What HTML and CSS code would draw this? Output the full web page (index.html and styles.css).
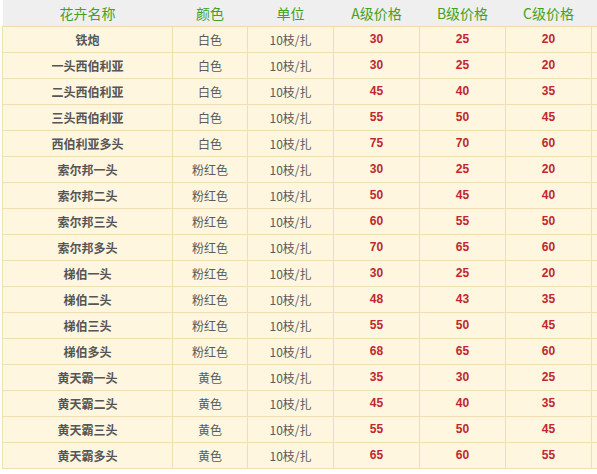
FILE: index.html
```html
<!DOCTYPE html>
<html>
<head>
<meta charset="utf-8">
<link rel="stylesheet" href="styles.css">
</head>
<body>
<table class="price">
<colgroup>
<col class="c-name"><col class="c-color"><col class="c-unit"><col class="c-p"><col class="c-p"><col class="c-p"><col class="c-rest">
</colgroup>
<thead>
<tr><th>花卉名称</th><th>颜色</th><th>单位</th><th>A级价格</th><th>B级价格</th><th>C级价格</th><th></th></tr>
</thead>
<tbody>
<tr><td class="name">铁炮</td><td>白色</td><td>10枝/扎</td><td class="p">30</td><td class="p">25</td><td class="p">20</td><td></td></tr>
<tr><td class="name">一头西伯利亚</td><td>白色</td><td>10枝/扎</td><td class="p">30</td><td class="p">25</td><td class="p">20</td><td></td></tr>
<tr><td class="name">二头西伯利亚</td><td>白色</td><td>10枝/扎</td><td class="p">45</td><td class="p">40</td><td class="p">35</td><td></td></tr>
<tr><td class="name">三头西伯利亚</td><td>白色</td><td>10枝/扎</td><td class="p">55</td><td class="p">50</td><td class="p">45</td><td></td></tr>
<tr><td class="name">西伯利亚多头</td><td>白色</td><td>10枝/扎</td><td class="p">75</td><td class="p">70</td><td class="p">60</td><td></td></tr>
<tr><td class="name">索尔邦一头</td><td>粉红色</td><td>10枝/扎</td><td class="p">30</td><td class="p">25</td><td class="p">20</td><td></td></tr>
<tr><td class="name">索尔邦二头</td><td>粉红色</td><td>10枝/扎</td><td class="p">50</td><td class="p">45</td><td class="p">40</td><td></td></tr>
<tr><td class="name">索尔邦三头</td><td>粉红色</td><td>10枝/扎</td><td class="p">60</td><td class="p">55</td><td class="p">50</td><td></td></tr>
<tr><td class="name">索尔邦多头</td><td>粉红色</td><td>10枝/扎</td><td class="p">70</td><td class="p">65</td><td class="p">60</td><td></td></tr>
<tr><td class="name">梯伯一头</td><td>粉红色</td><td>10枝/扎</td><td class="p">30</td><td class="p">25</td><td class="p">20</td><td></td></tr>
<tr><td class="name">梯伯二头</td><td>粉红色</td><td>10枝/扎</td><td class="p">48</td><td class="p">43</td><td class="p">35</td><td></td></tr>
<tr><td class="name">梯伯三头</td><td>粉红色</td><td>10枝/扎</td><td class="p">55</td><td class="p">50</td><td class="p">45</td><td></td></tr>
<tr><td class="name">梯伯多头</td><td>粉红色</td><td>10枝/扎</td><td class="p">68</td><td class="p">65</td><td class="p">60</td><td></td></tr>
<tr><td class="name">黄天霸一头</td><td>黄色</td><td>10枝/扎</td><td class="p">35</td><td class="p">30</td><td class="p">25</td><td></td></tr>
<tr><td class="name">黄天霸二头</td><td>黄色</td><td>10枝/扎</td><td class="p">45</td><td class="p">40</td><td class="p">35</td><td></td></tr>
<tr><td class="name">黄天霸三头</td><td>黄色</td><td>10枝/扎</td><td class="p">55</td><td class="p">50</td><td class="p">45</td><td></td></tr>
<tr><td class="name">黄天霸多头</td><td>黄色</td><td>10枝/扎</td><td class="p">65</td><td class="p">60</td><td class="p">55</td><td></td></tr>
</tbody>
</table>
</body>
</html>
```
FILE: styles.css
```css
html, body {
  margin: 0;
  padding: 0;
  background: #ffffff;
}
body {
  font-family: "Noto Sans CJK SC", "DejaVu Sans", sans-serif;
  overflow: hidden;
}
.price {
  border-collapse: collapse;
  table-layout: fixed;
  width: 620px;
  margin-left: 2px;
}
.c-name { width: 170px; }
.c-color { width: 75px; }
.c-unit { width: 86px; }
.c-p { width: 86px; }
.c-rest { width: 31px; }
.price th {
  background: #efefef;
  color: #46a01c;
  font-weight: normal;
  font-size: 14px;
  height: 26px;
  padding: 0;
  line-height: 26px;
  text-align: center;
  border-bottom: 1px solid #f0dcaa;
}
.price td {
  background: #fff6e0;
  border: 1px solid #f0dfb2;
  height: 25px;
  padding: 0;
  text-align: center;
  font-size: 12px;
  color: #5a5a5a;
  line-height: 25px;
}
.price td.name {
  font-weight: bold;
  color: #555555;
}
.price td.p {
  font-family: "Liberation Sans", sans-serif;
  font-weight: bold;
  font-size: 12px;
  color: #c0272d;
}
```
